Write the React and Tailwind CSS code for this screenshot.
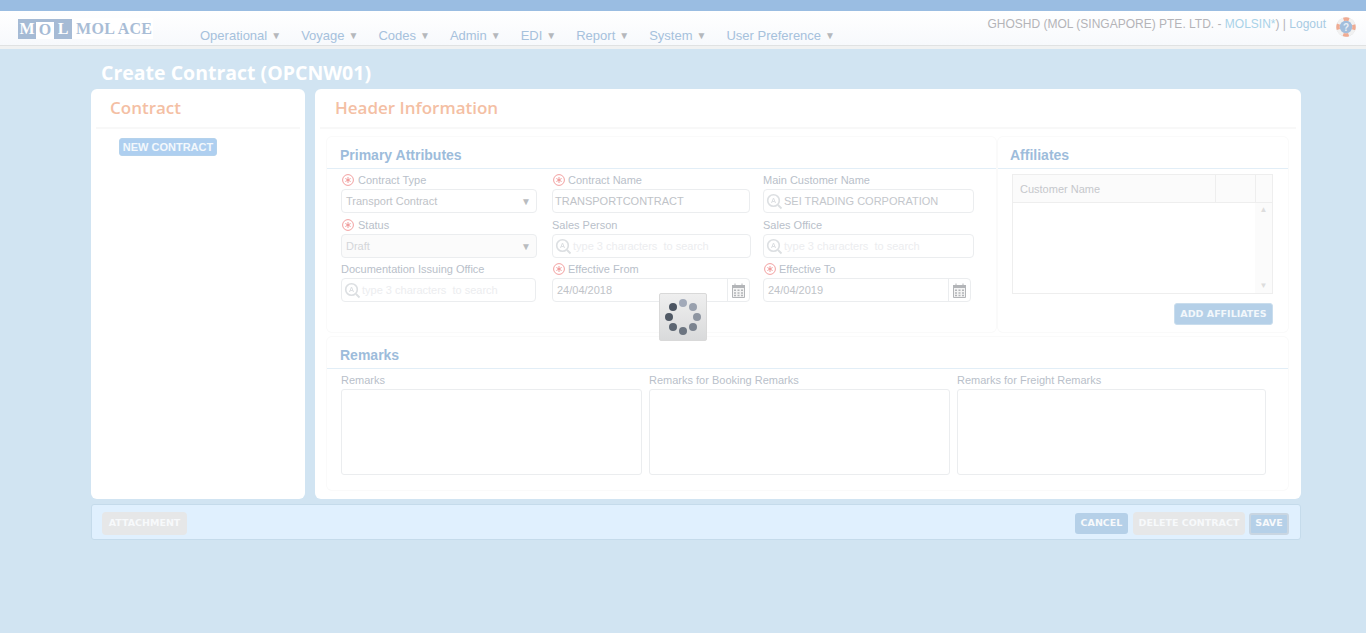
const menus = ['Operational', 'Voyage', 'Codes', 'Admin', 'EDI', 'Report', 'System', 'User Preference'];

const Required = ({ wide }) => (
    <svg width="12" height="12" viewBox="0 0 12 12" fill="none" className={`ml-[1px] shrink-0 ${wide ? 'mr-[4px]' : 'mr-[3px]'}`}>
        <circle cx="6" cy="6" r="5.4" stroke="#f2a0a0" />
        <path d="M6 3v6M3.4 4.5l5.2 3M3.4 7.5l5.2-3" stroke="#ee9090" strokeWidth=".9" />
    </svg>
);

const Label = ({ required, wide, children }) => (
    <div className="mb-[1px] flex h-[16px] items-center text-[11px] leading-none text-[#b9bfca]">
        {required && <Required wide={wide} />}
        {children}
    </div>
);

const SearchIcon = () => (
    <svg width="17" height="17" viewBox="0 0 17 17" fill="none" className="mr-[1px] shrink-0">
        <circle cx="7.5" cy="7.5" r="5.8" stroke="#dcdfe2" strokeWidth="1.6" />
        <path d="M12 12l3.5 3.5" stroke="#dcdfe2" strokeWidth="1.8" />
        <path d="M5.5 10l2-5 2 5M6.2 8.5h2.6" stroke="#dcdfe2" strokeWidth="1" />
    </svg>
);

const CalendarIcon = () => (
    <svg width="13" height="15" viewBox="0 0 13 15" fill="none">
        <path d="M.5 2.5h12v12H.5z" fill="#f4f4f4" stroke="#b3b5b8" />
        <path d="M0 2h13v3H0z" fill="#b3b5b8" />
        <path d="M3 .5v3M10 .5v3" stroke="#b3b5b8" />
        <path d="M2 6.5h2v1.5H2zM5.5 6.5h2v1.5h-2zM9 6.5h2v1.5H9zM2 9.2h2v1.5H2zM5.5 9.2h2v1.5h-2zM9 9.2h2v1.5H9zM2 11.8h2v1.5H2zM5.5 11.8h2v1.5h-2zM9 11.8h2v1.5H9z" fill="#b3b5b8" />
    </svg>
);

const HelpIcon = () => (
    <svg width="20" height="20" viewBox="0 0 20 20">
        <circle cx="10" cy="10" r="9.8" fill="#e4e4e4" />
        <circle cx="10" cy="10" r="8" fill="none" stroke="#f1f1f1" strokeWidth="3.4" />
        <circle cx="10" cy="10" r="8" fill="none" stroke="#f0ab92" strokeWidth="3.4" strokeDasharray="5.5 7.07" strokeDashoffset="2.75" />
        <circle cx="10" cy="10" r="6.2" fill="#a3bedc" />
        <text x="10" y="13.5" textAnchor="middle" fontSize="10" fontWeight="bold" fill="#e8eef5" fontFamily="Liberation Sans">?</text>
    </svg>
);

const Box = ({ className = '', children }) => (
    <div className={`flex h-[24px] items-center rounded-[4px] border border-[#ebedef] text-[11px] ${className}`}>
        {children}
    </div>
);

const SearchField = ({ value, width }) => (
    <Box className={`${width} px-[2px]`}>
        <SearchIcon />
        {value ? (
            <span className="text-[#c4c7cc]">{value}</span>
        ) : (
            <span className="text-[#ecedef]">type 3 characters&nbsp; to search</span>
        )}
    </Box>
);

const SelectField = ({ value, disabled }) => (
    <Box className={`w-[196px] justify-between pl-[4px] pr-[5px] ${disabled ? 'bg-[#fbfbfb]' : ''}`}>
        <span className={disabled ? 'text-[#d4d6d9]' : 'text-[#c0c3c8]'}>{value}</span>
        <span className="text-[10px] text-[#b9bcc0]">▼</span>
    </Box>
);

const DateField = ({ value, width }) => (
    <Box className={width}>
        <span className="flex-1 pl-[4px] text-[#c0c3c8]">{value}</span>
        <span className="flex h-full w-[22px] items-center justify-center border-l border-[#ebedef]">
            <CalendarIcon />
        </span>
    </Box>
);

const SectionTitle = ({ children, className = 'pl-[13px]' }) => (
    <div className={`flex h-[32px] items-center border-b border-[#e2eef7] pt-[5px] text-[14px] font-bold text-[#9dbcdb] ${className}`}>
        {children}
    </div>
);

const Spinner = () => {
    const dots = [
        ['left-[19px] top-[5px]', 'bg-[#a2aab9]'],
        ['left-[29px] top-[9px]', 'bg-[#99a1ae]'],
        ['left-[33px] top-[19px]', 'bg-[#8e95a1]'],
        ['left-[29px] top-[29px]', 'bg-[#7b838f]'],
        ['left-[19px] top-[33px]', 'bg-[#6c7581]'],
        ['left-[9px] top-[29px]', 'bg-[#5d6672]'],
        ['left-[5px] top-[19px]', 'bg-[#505965]'],
        ['left-[9px] top-[9px]', 'bg-[#4c5562]'],
    ];
    return (
        <div className="absolute left-[659px] top-[293px] h-[48px] w-[48px] rounded-[2px] border border-[#d9d9d9] bg-gradient-to-b from-[#efefef] to-[#d9dadb]">
            {dots.map(([pos, color]) => (
                <span key={pos} className={`absolute h-[8px] w-[8px] rounded-full ${pos} ${color}`} />
            ))}
        </div>
    );
};

export default function App() {
    return (
        <div className="relative h-[633px] w-[1366px] overflow-hidden bg-[#d1e4f2] font-['Liberation_Sans',sans-serif]">
            <div className="h-[11px] bg-[#9abde2]" />

            {/* Top navigation */}
            <div className="flex h-[35px] justify-between border-b border-[#e0e2e3] bg-gradient-to-b from-white to-[#f7f9fc]">
                <div className="flex">
                    <div className="ml-[18px] mt-[7px] flex h-[21px] w-[135px] items-center bg-white font-['Liberation_Serif',serif] text-[16px] font-bold text-[#a9bdd6]">
                        <span className="flex h-[20px] w-[18px] items-center justify-center bg-[#a6bbd5] text-white">M</span>
                        <span className="flex h-[20px] w-[18px] items-center justify-center border-t-[3px] border-[#a6bbd5] bg-white text-[#a6bbd5]">O</span>
                        <span className="flex h-[20px] w-[18px] items-center justify-center bg-[#a6bbd5] text-white">L</span>
                        <span className="ml-[4px] tracking-[0.3px]">MOL ACE</span>
                    </div>
                    <nav className="ml-[47px] mt-[15px] flex gap-[20px] text-[13px] leading-[16px] text-[#a6c1dc]">
                        {menus.map((name) => (
                            <span key={name} className="flex items-center">
                                {name}
                                <span className="ml-[4px] text-[10px] text-[#b5b8bc]">▼</span>
                            </span>
                        ))}
                    </nav>
                </div>
                <div className="flex items-start pr-[10px] pt-[6px] text-[12px] leading-[14px] text-[#b4b4b8]">
                    <span className="mr-[10px]">
                        GHOSHD (MOL (SINGAPORE) PTE. LTD. - <span className="text-[#a8d2e8]">MOLSIN*</span>) | <span className="text-[#a8cbe3]">Logout</span>
                    </span>
                    <HelpIcon />
                </div>
            </div>
            <div className="h-[3px] bg-[#f1f2f2]" />

            {/* Page */}
            <div className="ml-[91px] mr-[65px]">
                <h1 className="ml-[10px] mt-[12px] h-[28px] font-['Open_Sans',sans-serif] text-[19.5px] font-bold leading-[24px] text-white">
                    Create Contract (OPCNW01)
                </h1>

                <div className="flex gap-[10px]">
                    <aside className="h-[410px] w-[214px] rounded-[6px] bg-white px-[5px]">
                        <div className="flex h-[40px] items-center border-b-2 border-[#f8f8f8] pb-[1px] pl-[14px] font-['Open_Sans',sans-serif] text-[17px] font-semibold text-[#f4bfa4]">
                            Contract
                        </div>
                        <div className="ml-[23px] mt-[9px] flex h-[18px] w-[98px] items-center justify-center rounded-[3px] border border-[#b4d2ec] bg-[#aecff0] text-[11px] font-bold text-[#f3f8fc]">
                            NEW CONTRACT
                        </div>
                    </aside>

                    <main className="h-[410px] flex-1 rounded-[6px] bg-white px-[5px]">
                        <div className="flex h-[40px] items-center border-b-2 border-[#f8f8f8] pb-[1px] pl-[15px] font-['Open_Sans',sans-serif] text-[17px] font-semibold text-[#f4bfa4]">
                            Header Information
                        </div>

                        <div className="ml-[7px] mt-[8px] flex w-[961px] gap-[2px]">
                            {/* Primary attributes */}
                            <section className="h-[195px] w-[669px] rounded-[5px] ring-1 ring-[#fafafa]">
                                <SectionTitle>Primary Attributes</SectionTitle>
                                <div className="ml-[14px] mt-[3px] grid grid-cols-[211px_211px_211px]">
                                    <div>
                                        <Label required wide>Contract Type</Label>
                                        <SelectField value="Transport Contract" />
                                    </div>
                                    <div>
                                        <Label required>Contract Name</Label>
                                        <Box className="w-[198px] pl-[2px] text-[#c0c3c8]">TRANSPORTCONTRACT</Box>
                                    </div>
                                    <div>
                                        <Label>Main Customer Name</Label>
                                        <SearchField value="SEI TRADING CORPORATION" width="w-[211px]" />
                                    </div>
                                    <div className="mt-[4px]">
                                        <Label required wide>Status</Label>
                                        <SelectField value="Draft" disabled />
                                    </div>
                                    <div className="mt-[4px]">
                                        <Label>Sales Person</Label>
                                        <SearchField width="w-[199px]" />
                                    </div>
                                    <div className="mt-[4px]">
                                        <Label>Sales Office</Label>
                                        <SearchField width="w-[211px]" />
                                    </div>
                                    <div className="mt-[3px]">
                                        <Label>Documentation Issuing Office</Label>
                                        <SearchField width="w-[195px]" />
                                    </div>
                                    <div className="mt-[3px]">
                                        <Label required>Effective From</Label>
                                        <DateField value="24/04/2018" width="w-[198px]" />
                                    </div>
                                    <div className="mt-[3px]">
                                        <Label required>Effective To</Label>
                                        <DateField value="24/04/2019" width="w-[208px]" />
                                    </div>
                                </div>
                            </section>

                            {/* Affiliates */}
                            <section className="h-[195px] w-[290px] rounded-[5px] ring-1 ring-[#fafafa]">
                                <SectionTitle className="pl-[12px]">Affiliates</SectionTitle>
                                <div className="ml-[14px] mt-[5px] w-[261px] border border-[#eeeeee]">
                                    <div className="flex h-[28px] border-b border-[#eeeeee] bg-[#fbfbfb] text-[11px] leading-[28px] text-[#c6c8cc]">
                                        <div className="w-[203px] border-r border-[#eeeeee] pl-[7px]">Customer Name</div>
                                        <div className="w-[40px] border-r border-[#eeeeee]" />
                                    </div>
                                    <div className="flex h-[90px] justify-end">
                                        <div className="flex w-[17px] flex-col items-center justify-between bg-[#fbfbfb] py-[3px] text-[8px] leading-none text-[#dddddd]">
                                            <span>▲</span>
                                            <span>▼</span>
                                        </div>
                                    </div>
                                </div>
                                <div className="mt-[9px] flex w-[275px] justify-end">
                                    <div className="flex h-[22px] w-[99px] items-center justify-center rounded-[3px] border border-[#c9dded] bg-[#b5d0e8] font-['DejaVu_Sans',sans-serif] text-[9.5px] font-bold text-[#f2f7fb]">
                                        ADD AFFILIATES
                                    </div>
                                </div>
                            </section>
                        </div>

                        {/* Remarks */}
                        <section className="ml-[7px] mt-[5px] h-[153px] w-[961px] rounded-[5px] ring-1 ring-[#fafafa]">
                            <SectionTitle>Remarks</SectionTitle>
                            <div className="ml-[14px] mt-[3px] flex gap-[7px]">
                                {['Remarks', 'Remarks for Booking Remarks', 'Remarks for Freight Remarks'].map((label, i) => (
                                    <div key={label} className={i === 2 ? 'w-[309px]' : 'w-[301px]'}>
                                        <Label>{label}</Label>
                                        <div className="h-[86px] rounded-[3px] border border-[#ebedef]" />
                                    </div>
                                ))}
                            </div>
                        </section>
                    </main>
                </div>

                {/* Bottom actions */}
                <div className="mt-[5px] flex h-[36px] items-center justify-between rounded-[3px] border border-[#c5dbeb] bg-[#e0f0fe] pl-[10px] pr-[11px] pt-[3px] font-['DejaVu_Sans',sans-serif] text-[9.5px] font-bold text-[#f7f9fb]">
                    <div className="flex h-[23px] w-[85px] items-center justify-center rounded-[4px] bg-[#e6e7e8]">ATTACHMENT</div>
                    <div className="flex items-center">
                        <div className="flex h-[21px] w-[53px] items-center justify-center rounded-[3px] bg-[#b5d0e8]">CANCEL</div>
                        <div className="ml-[5px] flex h-[23px] w-[112px] items-center justify-center rounded-[4px] bg-[#e6e7e8]">DELETE CONTRACT</div>
                        <div className="ml-[4px] flex h-[22px] w-[40px] items-center justify-center rounded-[3px] border-2 border-[#c9d6e2] bg-[#b5d0e8]">SAVE</div>
                    </div>
                </div>
            </div>

            <Spinner />
        </div>
    );
}
